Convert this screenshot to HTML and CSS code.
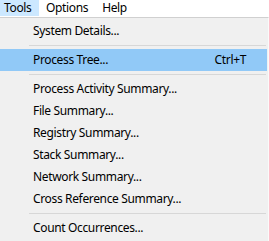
FILE: index.html
```html
<!DOCTYPE html>
<html lang="en">
<head>
  <meta charset="UTF-8" />
  <title>Tools menu</title>
  <link rel="stylesheet" href="styles.css">
</head>
<body>

  <nav class="menubar">
    <span class="menubar-item open">Tools</span>
    <span class="menubar-item">Options</span>
    <span class="menubar-item">Help</span>
  </nav>

  <div class="menu">
    <div class="menu-item">System Details...</div>
    <div class="menu-sep"></div>
    <div class="menu-item active">Process Tree... <span class="shortcut">Ctrl+T</span></div>
    <div class="menu-sep"></div>
    <div class="menu-item">Process Activity Summary...</div>
    <div class="menu-item">File Summary...</div>
    <div class="menu-item">Registry Summary...</div>
    <div class="menu-item">Stack Summary...</div>
    <div class="menu-item">Network Summary...</div>
    <div class="menu-item">Cross Reference Summary...</div>
    <div class="menu-sep"></div>
    <div class="menu-item">Count Occurrences...</div>
  </div>

</body>
</html>
```

FILE: styles.css
```css
body {
  margin: 0;
  font-family: 'Noto Sans', sans-serif;
  font-size: 12px;
  letter-spacing: -0.35px;
  color: #000;
  background-color: #fff;
  overflow: hidden;
}

.menubar {
  display: flex;
  height: 17px;
  background-color: #fff;
}

.menubar-item {
  padding: 0 7px;
  line-height: 16px;
  height: 16px;
}

.menubar-item.open {
  background-color: #cce8ff;
  padding: 0 6px 0 4px;
  min-width: 29px;
}

.menu {
  background-color: #f0f0f0;
  border-top: 1px solid #d0d0d0;
  border-right: 1px solid #fafafa;
  width: 268px;
  padding-top: 2px;
  height: 223px;
}

.menu-item {
  display: flex;
  height: 22px;
  line-height: 22px;
  padding-left: 33px;
  padding-right: 21px;
  margin-right: 1px;
}

.menu-item.active {
  background-color: #91c9f7;
}

.shortcut {
  margin-left: auto;
}

.menu-sep {
  height: 1px;
  background-color: #d7d7d7;
  margin: 3px 2px 3px 29px;
}
```
